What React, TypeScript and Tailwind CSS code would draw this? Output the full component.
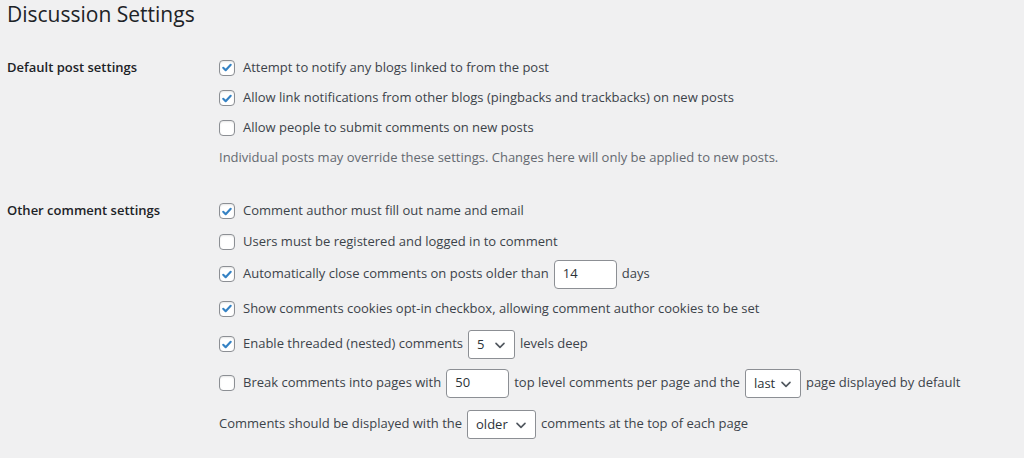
import type { ReactNode } from "react";

const font = { fontFamily: '"Segoe UI", "Open Sans", "Noto Sans", sans-serif' };

function Checkbox({ checked }: { checked?: boolean }) {
  return (
    <span className="relative inline-flex h-4 w-4 shrink-0 items-center justify-center rounded-[4px] border border-[#8c8f94] bg-white shadow-[inset_0_1px_2px_rgba(0,0,0,0.1)]">
      {checked && (
        <svg viewBox="0 0 20 20" className="h-[17px] w-[17px]">
          <path d="M4.6 10.4l3.5 3.5 7.2-7.8" fill="none" stroke="#3582c4" strokeWidth="3" strokeLinecap="round" strokeLinejoin="round" />
        </svg>
      )}
    </span>
  );
}

function TextBox({ value, width }: { value: string; width: string }) {
  return (
    <span className={`inline-flex h-[29px] shrink-0 items-center rounded-[4px] border border-[#8c8f94] bg-white px-2 text-[#2c3338] ${width}`}>
      {value}
    </span>
  );
}

function Select({ value, width }: { value: string; width: string }) {
  return (
    <span className={`inline-flex h-[29px] shrink-0 items-center justify-between rounded-[3px] border border-[#8c8f94] bg-white pl-2 pr-[6px] pt-[2px] text-[#2c3338] ${width}`}>
      <span>{value}</span>
      <svg viewBox="0 0 20 20" className="h-[16px] w-[16px]">
        <path d="M5 8l5 5 5-5" fill="none" stroke="#50575e" strokeWidth="2" strokeLinecap="round" strokeLinejoin="round" />
      </svg>
    </span>
  );
}

function Row({ h, children }: { h: string; children: ReactNode }) {
  return <div className={`flex items-center gap-[5px] ${h}`}>{children}</div>;
}

function CheckRow({ h, checked, children }: { h: string; checked?: boolean; children: ReactNode }) {
  return (
    <div className={`flex items-center ${h}`}>
      <Checkbox checked={checked} />
      <div className="ml-2 flex items-center gap-[5px]">{children}</div>
    </div>
  );
}

export default function App() {
  return (
    <div className="h-[458px] w-[1024px] overflow-hidden bg-[#f0f0f1] text-[13px] text-[#3c434a]" style={font}>
      <h1 className="flex h-[30px] items-center pl-[7px] text-[21px] font-normal text-[#1d2327]">Discussion Settings</h1>

      <section className="mt-[22px] flex">
        <div className="w-[219px] shrink-0 pl-[7px]">
          <div className="flex h-[31px] items-center font-semibold text-[#1d2327]">Default post settings</div>
        </div>
        <div className="flex flex-col">
          <CheckRow h="h-[31px]" checked>Attempt to notify any blogs linked to from the post</CheckRow>
          <CheckRow h="h-[30px]" checked>Allow link notifications from other blogs (pingbacks and trackbacks) on new posts</CheckRow>
          <CheckRow h="h-[30px]">Allow people to submit comments on new posts</CheckRow>
          <Row h="h-[30px]">
            <span className="text-[#646970]">Individual posts may override these settings. Changes here will only be applied to new posts.</span>
          </Row>
        </div>
      </section>

      <section className="mt-[23px] flex">
        <div className="w-[219px] shrink-0 pl-[7px]">
          <div className="flex h-[30px] items-center font-semibold text-[#1d2327]">Other comment settings</div>
        </div>
        <div className="flex flex-col">
          <CheckRow h="h-[30px]" checked>Comment author must fill out name and email</CheckRow>
          <CheckRow h="h-[31px]">Users must be registered and logged in to comment</CheckRow>
          <CheckRow h="h-[34px]" checked>
            <span>Automatically close comments on posts older than</span>
            <TextBox value="14" width="w-[63px]" />
            <span>days</span>
          </CheckRow>
          <CheckRow h="h-[35px]" checked>Show comments cookies opt-in checkbox, allowing comment author cookies to be set</CheckRow>
          <CheckRow h="h-[36px]" checked>
            <span>Enable threaded (nested) comments</span>
            <Select value="5" width="w-[47px]" />
            <span>levels deep</span>
          </CheckRow>
          <CheckRow h="h-[42px]">
            <span>Break comments into pages with</span>
            <TextBox value="50" width="w-[63px]" />
            <span>top level comments per page and the</span>
            <Select value="last" width="w-[56px]" />
            <span>page displayed by default</span>
          </CheckRow>
          <Row h="h-[40px]">
            <span>Comments should be displayed with the</span>
            <Select value="older" width="w-[69px]" />
            <span>comments at the top of each page</span>
          </Row>
        </div>
      </section>
    </div>
  );
}
